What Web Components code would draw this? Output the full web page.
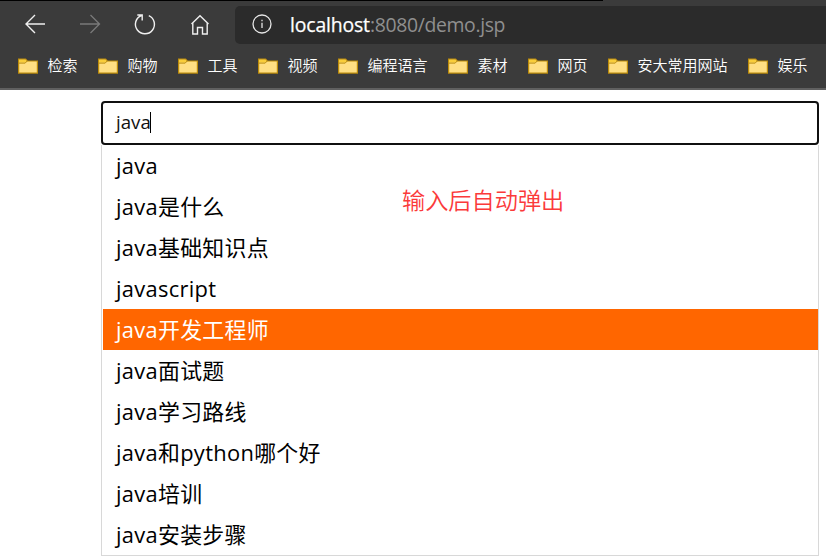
<!DOCTYPE html>
<html lang="zh-CN">
<head>
<meta charset="utf-8">
<title>demo</title>
<style>
html,body{margin:0;height:558px;overflow:hidden;background:#fff}
body{font-family:"Open Sans","Noto Sans CJK SC",sans-serif}
</style>
</head>
<body>
<browser-chrome></browser-chrome>
<search-page></search-page>
<script>
function define(name, html) {
  const t = document.createElement('template');
  t.innerHTML = html;
  customElements.define(name, class extends HTMLElement {
    constructor() {
      super();
      this.attachShadow({mode: 'open'}).appendChild(t.content.cloneNode(true));
    }
  });
}

define('book-mark', `
<style>
:host{display:flex;align-items:center;gap:10px;height:24px;color:#fff;font:350 15px/24px "Noto Sans CJK SC",sans-serif;white-space:nowrap}
svg{display:block;flex:none}
span{margin:-1px .6px 1px -.6px}
</style>
<svg width="20" height="16" viewBox="0 0 20 16">
<path d="M.6 1.1H7.6L9.3 3H19.4V15.1H.6Z" fill="#ffdf84" stroke="#bb8b0b" stroke-width="1.2"/>
<path d="M1.2 1.7H7.8L8.6 3.1L7.2 4.6H1.2Z" fill="#f9cd3a"/>
<path d="M.6 5.1H7.2L9.2 3" fill="none" stroke="#bb8b0b"/>
</svg>
<span><slot></slot></span>`);

define('address-bar', `
<style>
:host{display:flex;align-items:center;flex:1;height:38px;background:#2b2b2b;border-radius:5px 0 0 5px;color:#8f8f8f;font:19.4px/38px "Open Sans",sans-serif;box-sizing:border-box;padding-left:17px}
svg{display:block;margin:-2px 18px 0 0;flex:none}
b{font-weight:400;color:#fff;-webkit-text-stroke:.25px #fff;letter-spacing:-.15px}
.u{white-space:nowrap;letter-spacing:-.34px}
</style>
<svg width="20" height="20" viewBox="0 0 20 20" fill="none" stroke="#e6e6e6" stroke-width="1.3"><circle cx="10" cy="10" r="9"/><path d="M10 8.8V14M10 5.8V7.3"/></svg>
<span class="u"><b><slot name="host"></slot></b><slot></slot></span>`);

define('browser-chrome', `
<style>
:host{display:block;height:90px;box-sizing:border-box;background:linear-gradient(#000,#000) 0 0/603px 1px no-repeat #3b3b3b;border-bottom:2px solid #606060;overflow:hidden}
.nav{display:flex;height:38px;padding-top:6px;align-items:center}
.icons{width:235px;display:flex;padding-left:23px;box-sizing:border-box;gap:31px;margin-top:-2px}
svg{display:block;flex:none}
.marks{display:flex;gap:20px;padding:10px 0 0 18px}
</style>
<div class="nav">
<div class="icons">
<svg width="24" height="24" viewBox="23 12 24 24" fill="none" stroke="#f0f0f0" stroke-width="1.4"><path d="M45 24H26M35 15L26 24L35 33"/></svg>
<svg width="24" height="24" viewBox="78 12 24 24" fill="none" stroke="#7a7a7a" stroke-width="1.3"><path d="M80 24H99.5M90.5 15L99.5 24L90.5 33"/></svg>
<svg width="24" height="24" viewBox="133 12 24 24" fill="none" stroke="#f0f0f0" stroke-width="1.4"><path d="M148.8 15.6A9.5 9.5 0 1 1 141.3 15.5M137.3 15H142.2V20.5"/></svg>
<svg width="24" height="24" viewBox="188 12 24 24" fill="none" stroke="#f0f0f0" stroke-width="1.4"><path d="M191.5 24L200 15.8L208.5 24M192.8 22.8V34H197.5V27.5H202.5V34H207.2V22.8"/></svg>
</div>
<address-bar><span slot="host">localhost</span>:8080/demo.jsp</address-bar>
</div>
<div class="marks">
<book-mark>检索</book-mark><book-mark>购物</book-mark><book-mark>工具</book-mark><book-mark>视频</book-mark><book-mark>编程语言</book-mark><book-mark>素材</book-mark><book-mark>网页</book-mark><book-mark>安大常用网站</book-mark><book-mark>娱乐</book-mark>
</div>`);

define('search-box', `
<style>
:host{display:flex;align-items:center;height:44px;box-sizing:border-box;border:2px solid #101010;border-radius:4px;padding:0 0 2px 13px;font:18.7px/36px "Open Sans",sans-serif;color:#111}
i{width:1px;height:21px;background:#000;margin-left:-1px}
</style>
<slot></slot><i></i>`);

define('suggest-item', `
<style>
:host{display:flex;height:41px;box-sizing:border-box;padding-left:13px;font:400 21.9px/41px "Open Sans","Noto Sans CJK SC",sans-serif;letter-spacing:.3px;color:#000;white-space:nowrap}
:host([active]){background:#ff6600;color:#fff}
</style>
<slot></slot>`);

define('suggest-list', `
<style>
:host{display:block;border:1px solid #d8d8d8;border-top:0;padding-left:1px}
</style>
<slot></slot>`);

define('float-note', `
<style>
:host{position:absolute;left:402px;top:182px;font:350 23.2px/34px "Noto Sans CJK SC",sans-serif;color:#fb3a3a;white-space:nowrap}
</style>
<slot></slot>`);

define('search-page', `
<style>
:host{display:block;padding:11px 7px 0 101px}
</style>
<search-box>java</search-box>
<suggest-list>
<suggest-item>java</suggest-item>
<suggest-item>java是什么</suggest-item>
<suggest-item>java基础知识点</suggest-item>
<suggest-item>javascript</suggest-item>
<suggest-item active>java开发工程师</suggest-item>
<suggest-item>java面试题</suggest-item>
<suggest-item>java学习路线</suggest-item>
<suggest-item>java和python哪个好</suggest-item>
<suggest-item>java培训</suggest-item>
<suggest-item>java安装步骤</suggest-item>
</suggest-list>
<float-note>输入后自动弹出</float-note>`);
</script>
</body>
</html>
